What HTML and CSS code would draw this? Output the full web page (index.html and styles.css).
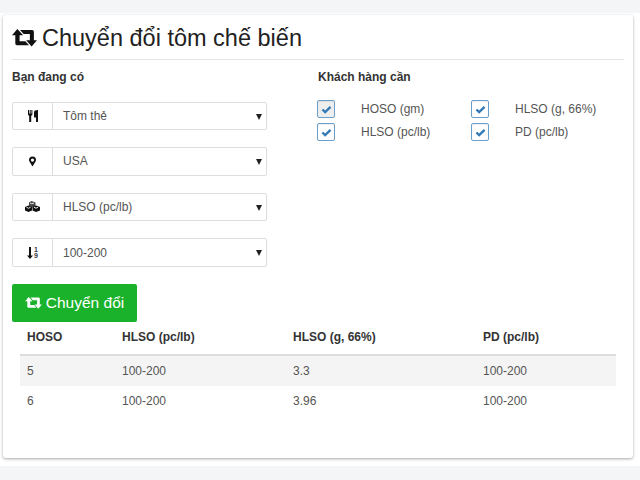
FILE: index.html
```html
<!DOCTYPE html>
<html lang="vi">
<head>
<meta charset="utf-8">
<title>Chuyển đổi tôm chế biến</title>
<link rel="stylesheet" href="styles.css">
</head>
<body>
<main class="band">
  <section class="card">
    <h1 class="title">
      <svg class="icon-retweet" viewBox="0 0 28 20"><path d="M6 0L12.500 7H8.500V13.500H15L19 18H5.500Q3.700 18 3.700 16.200V7H0Z M9 1H22.500Q24.500 1 24.500 3V12.500H28L22 19.500L15.800 12.500H20V5.500H13Z"/></svg>
      <span>Chuyển đổi tôm chế biến</span>
    </h1>
    <div class="columns">
      <div class="col-left">
        <h2 class="label">Bạn đang có</h2>
        <div class="fields">
          <div class="field">
            <span class="addon"><svg class="ico" viewBox="0 0 10 12"><path d="M0 0h1v3.500h.7V0h1v3.500h.7V0h1v4.500Q4.400 5.500 3.200 5.800V12H1.200V5.800Q0 5.500 0 4.500Z M6 5V2Q6 .2 10 0V12H8V7.500H6Z"/></svg></span>
            <span class="select-wrap"><select class="select"><option>Tôm thẻ</option></select></span>
          </div>
          <div class="field">
            <span class="addon"><svg class="ico-pin" viewBox="0 0 10 14"><path fill-rule="evenodd" d="M5 0A5 5 0 0 1 10 5Q10 7 5 14Q0 7 0 5A5 5 0 0 1 5 0ZM5 2.700A2.300 2.300 0 1 0 5 7.300A2.300 2.300 0 1 0 5 2.700Z"/></svg></span>
            <span class="select-wrap"><select class="select"><option>USA</option></select></span>
          </div>
          <div class="field">
            <span class="addon"><svg class="ico-cubes" viewBox="0 0 15 11"><path d="M6.500 0L10.500 1.500V5L7.500 6.500L4 5V1.500Z" fill="#444"/><path d="M3.500 4.500L7 6V9.500L3.500 11L0 9.500V6Z"/><path d="M11 4.500L15 6V9.500L11 11L7.500 9.500V6Z"/><path d="M5 2L6.800 2.800L9 2M1.500 6.300L3.500 7.200L5.500 6.300M9 6.300L11 7.200L13 6.300" fill="none" stroke="#fff" stroke-width=".9"/></svg></span>
            <span class="select-wrap"><select class="select"><option>HLSO (pc/lb)</option></select></span>
          </div>
          <div class="field">
            <span class="addon addon-sort"><svg class="ico-arrow" viewBox="0 0 6 12"><path d="M2 0H4V8.500H6L3 12L0 8.500H2Z"/></svg><span class="digits"><span>1</span><span>9</span></span></span>
            <span class="select-wrap"><select class="select"><option>100-200</option></select></span>
          </div>
        </div>
        <button class="btn" type="button">
          <svg class="icon-retweet-sm" viewBox="0 0 28 20"><path d="M6 0L12.500 7H8.500V13.500H15L19 18H5.500Q3.700 18 3.700 16.200V7H0Z M9 1H22.500Q24.500 1 24.500 3V12.500H28L22 19.500L15.800 12.500H20V5.500H13Z"/></svg>
          <span>Chuyển đổi</span>
        </button>
      </div>
      <div class="col-right">
        <h2 class="label">Khách hàng cần</h2>
        <div class="checks">
          <label class="check"><span class="box box-focus"><svg viewBox="0 0 12 10"><path d="M1.500 5L4.500 8L10.500 2" fill="none" stroke="#337ab7" stroke-width="2.600"/></svg></span><span>HOSO (gm)</span></label>
          <label class="check"><span class="box"><svg viewBox="0 0 12 10"><path d="M1.500 5L4.500 8L10.500 2" fill="none" stroke="#337ab7" stroke-width="2.600"/></svg></span><span>HLSO (g, 66%)</span></label>
          <label class="check"><span class="box"><svg viewBox="0 0 12 10"><path d="M1.500 5L4.500 8L10.500 2" fill="none" stroke="#337ab7" stroke-width="2.600"/></svg></span><span>HLSO (pc/lb)</span></label>
          <label class="check"><span class="box"><svg viewBox="0 0 12 10"><path d="M1.500 5L4.500 8L10.500 2" fill="none" stroke="#337ab7" stroke-width="2.600"/></svg></span><span>PD (pc/lb)</span></label>
        </div>
      </div>
    </div>
    <table class="table">
      <colgroup><col class="c1"><col class="c2"><col class="c3"><col class="c4"></colgroup>
      <thead><tr><th>HOSO</th><th>HLSO (pc/lb)</th><th>HLSO (g, 66%)</th><th>PD (pc/lb)</th></tr></thead>
      <tbody>
        <tr class="odd"><td>5</td><td>100-200</td><td>3.3</td><td>100-200</td></tr>
        <tr><td>6</td><td>100-200</td><td>3.96</td><td>100-200</td></tr>
      </tbody>
    </table>
  </section>
</main>
</body>
</html>
```

FILE: styles.css
```css
* { box-sizing: border-box; }
html, body { margin: 0; height: 480px; overflow: hidden; }
body {
  background: #f4f5f7;
  padding-top: 13px;
  font-family: "Liberation Sans", Arial, sans-serif;
  font-size: 12px;
  color: #555;
}
.band {
  background: #fff;
  height: 453px;
  padding: 2px 7px 8px 3px;
}
.card {
  height: 443px;
  background: #fff;
  border-radius: 3px;
  box-shadow: 0 1px 3px rgba(0, 0, 0, .35);
  padding: 0 9px 0 9px;
}
.title {
  margin: 0;
  height: 45px;
  padding-top: 2px;
  border-bottom: 1px solid #e5e5e5;
  display: flex;
  align-items: center;
  gap: 5px;
  font-size: 23.5px;
  font-weight: 400;
  color: #222;
  line-height: 32px;
}
.icon-retweet { width: 25px; height: 18px; fill: #111; flex: none; }
.columns { display: flex; }
.col-left { width: 255px; flex: none; }
.col-right { margin-left: 51px; flex: 1; }
.label {
  margin: 0;
  padding-top: 10px;
  height: 41.5px;
  font-size: 12px;
  line-height: 15px;
  font-weight: 700;
  color: #333;
}
.fields { display: flex; flex-direction: column; gap: 17px; }
.field {
  display: flex;
  height: 28.6px;
  border: 1px solid #ddd;
  border-radius: 2px;
}
.addon {
  width: 40px;
  flex: none;
  border-right: 1px solid #ddd;
  display: flex;
  align-items: center;
  justify-content: center;
}
.ico { height: 12px; width: 10px; fill: #111; }
.ico-pin { width: 7px; height: 11px; fill: #111; }
.ico-cubes { width: 15px; height: 11px; fill: #111; }
.addon-sort { gap: 1px; }
.ico-arrow { width: 6px; height: 12px; fill: #111; }
.digits {
  display: flex;
  flex-direction: column;
  font-size: 7px;
  line-height: 6px;
  font-weight: 700;
  color: #334;
}
.select-wrap { flex: 1; position: relative; display: flex; }
.select-wrap::after {
  content: "";
  position: absolute;
  right: 4px;
  top: 11px;
  border-left: 3.500px solid transparent;
  border-right: 3.500px solid transparent;
  border-top: 6px solid #222;
  pointer-events: none;
}
.select {
  appearance: none;
  width: 100%;
  border: 0;
  background: transparent;
  padding: 0 0 0 10px;
  font: inherit;
  color: #555;
  outline: 0;
}
.btn {
  margin-top: 17px;
  width: 125px;
  height: 38px;
  border: 0;
  border-radius: 2px;
  background: #19b22a;
  color: #fff;
  font-family: inherit;
  font-size: 15.500px;
  display: flex;
  align-items: center;
  justify-content: center;
  gap: 4px;
  padding: 0;
}
.icon-retweet-sm { width: 17px; height: 12px; fill: #fff; flex: none; }
.checks {
  display: grid;
  grid-template-columns: 154px 1fr;
  row-gap: 5px;
  margin-top: -1.500px;
}
.check {
  display: flex;
  align-items: center;
  gap: 26px;
  height: 18px;
  margin-left: -1px;
}
.box {
  width: 18px;
  height: 18px;
  flex: none;
  border: 1px solid #6a9fcb;
  border-radius: 2px;
  background: #fff;
  display: flex;
  align-items: center;
  justify-content: center;
  box-shadow: inset 0 1px 1px rgba(0, 0, 0, .07);
}
.box-focus { background: #eee; }
.box svg { width: 11px; height: 9px; }
.table {
  width: 596px;
  margin: 7px 0 0 8px;
  border-collapse: collapse;
  table-layout: fixed;
}
.c1 { width: 95px; }
.c2 { width: 171px; }
.c3 { width: 190px; }
.c4 { width: 140px; }
.table th {
  height: 26px;
  padding: 0 7px 8px;
  text-align: left;
  font-size: 12px;
  color: #333;
  border-bottom: 2px solid #ddd;
}
.table td { height: 31px; padding: 0 7px; }
.odd td { background: #f4f4f4; }
```
